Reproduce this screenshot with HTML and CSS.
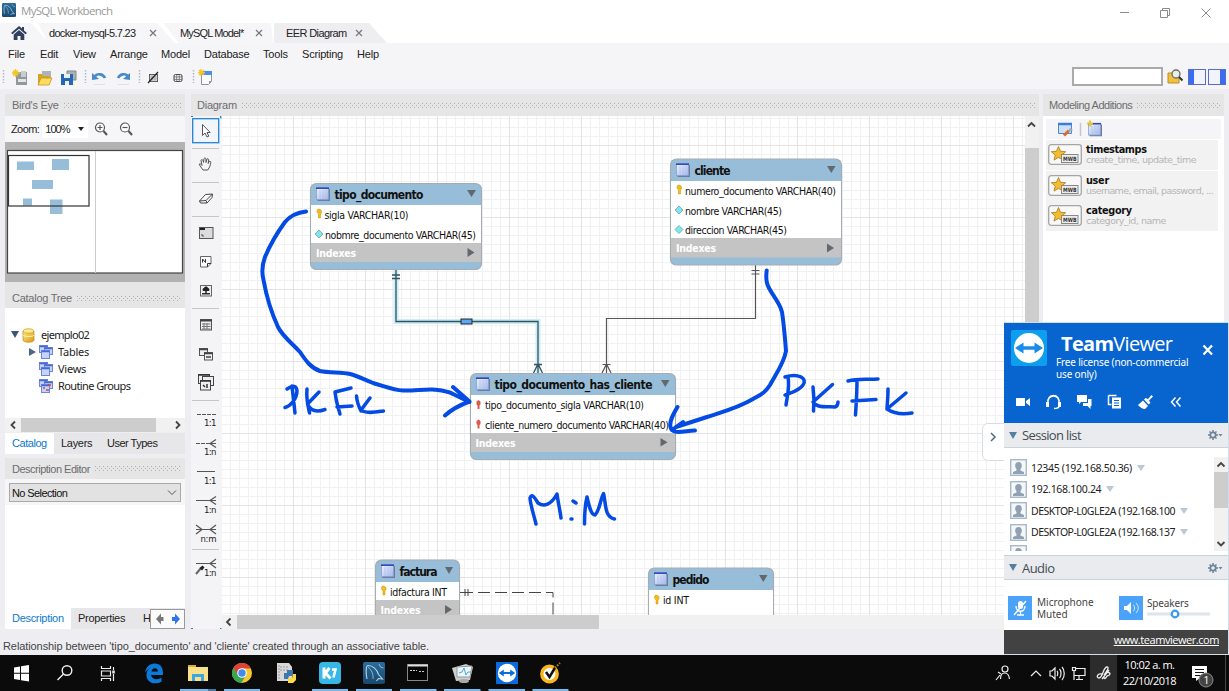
FILE: index.html
```html
<!DOCTYPE html>
<html lang="en">
<head>
<meta charset="utf-8">
<title>MySQL Workbench</title>
<link rel="stylesheet" href="styles.css">
</head>
<body>
<svg class="defs" width="0" height="0">
  <defs>
    <linearGradient id="gold" x1="0" y1="0" x2="1" y2="1"><stop offset="0" stop-color="#ffe98a"/><stop offset="1" stop-color="#d99a10"/></linearGradient>
    <linearGradient id="sheet" x1="0" y1="0" x2="1" y2="1"><stop offset="0" stop-color="#f4f7ff"/><stop offset="1" stop-color="#9db4e6"/></linearGradient>
    <linearGradient id="dol" x1="0" y1="0" x2="0" y2="1"><stop offset="0" stop-color="#2a6d9b"/><stop offset="1" stop-color="#19486c"/></linearGradient>
    <symbol id="dolphin" viewBox="0 0 22 22"><rect width="22" height="22" rx="2" fill="url(#dol)"/><path d="M4 17C2.500 10 3 3.500 5 3.500c5 0 9 4 10.500 9l4 4.500-4-.5-2 2.500" fill="none" stroke="#b8d3e6" stroke-width="1.100"/><path d="M5 5c4 3 5.500 8 5 12M16 2l1.500 3 3 1" fill="none" stroke="#8fb6cf"/></symbol>
    <symbol id="tbl" viewBox="0 0 14 14"><rect x="1.500" y="2" width="12.500" height="12" fill="#6c7c9e"/><rect x=".5" y=".5" width="12" height="12" fill="url(#sheet)" stroke="#8ba0d4" stroke-width=".8"/><path d="M0 1.200h13" stroke="#3047bd" stroke-width="1.600"/><path d="M4 3v9M7 3v9M10 3v9" stroke="#b5c6ee"/></symbol>
    <symbol id="stack" viewBox="0 0 14 14"><g fill="#c3d3fb" stroke="#6c86d9"><rect x=".5" y=".5" width="8" height="7"/><rect x="5.500" y="2.500" width="8" height="7"/><rect x="2.500" y="5.500" width="8" height="8"/></g><path d="M.5 1.500h8M5.500 3.500h8M2.500 6.500h8" stroke="#4969d0" stroke-width="1.500"/></symbol>
    <symbol id="star" viewBox="0 0 34 21"><rect x=".7" y=".7" width="32.600" height="19.600" rx="2.500" fill="#f8f8f8" stroke="#a5a5a5" stroke-width="1.300"/><path d="M10.500 2.500l2 4.800 5.200.4-4 3.400 1.300 5-4.500-2.700L6 16.100l1.300-5-4-3.400 5.200-.4z" fill="#f4bd2e" stroke="#a9761c" stroke-width=".8"/><rect x="13.500" y="10.500" width="16.500" height="8" fill="#eee" stroke="#888"/><text x="15" y="17" font-family="DejaVu Sans Condensed" font-size="6" font-weight="700" fill="#333" textLength="13.500" lengthAdjust="spacingAndGlyphs">MWB</text></symbol>
    <symbol id="person" viewBox="0 0 17 17"><rect x=".7" y=".7" width="15.600" height="15.600" fill="#f5f7f9" stroke="#a9b9c8" stroke-width="1.400"/><path d="M3 15v-2l3.500-1.500V10C4.500 8 4.500 3 8.500 3s4 5 2 7v1.500L14 13v2z" fill="#8fa1b3"/></symbol>
    <symbol id="gear" viewBox="0 0 16 10"><circle cx="5" cy="5" r="2.700" fill="none" stroke="#6d8599" stroke-width="1.800"/><path d="M5 0v2M5 8v2M0 5h2M8 5h2M1.500 1.500l1.300 1.300M7.200 7.200l1.300 1.300M8.500 1.500L7.200 2.800M2.800 7.200L1.500 8.500" stroke="#6d8599" stroke-width="1.500"/><path d="M10.500 4h4l-2 2.500z" fill="#6d8599"/></symbol>
    <symbol id="tv" viewBox="0 0 22 22"><rect width="22" height="22" fill="#0a6bdc"/><circle cx="11" cy="11" r="9.200" fill="#fff"/><path d="M2.800 11l5-3.500V10h6.400V7.500l5 3.500-5 3.500V12H7.800v2.500z" fill="#0a6bdc"/></symbol>
    <symbol id="folder" viewBox="0 0 16 16"><path d="M5 1h9v9H5z" fill="#aeb4b6"/><path d="M1 4h4l1 2h5l3 1-2 8H1z" fill="#d9a520"/><path d="M4 8h11l-3 7H1z" fill="#ffdc5c" stroke="#c7951c" stroke-width=".8"/></symbol>
  </defs>
</svg>

<header class="titlebar">
  <svg width="14" height="14"><use href="#dolphin"/></svg>
  <span class="apptitle">MySQL Workbench</span>
  <svg class="winbtns" width="100" height="22" fill="none" stroke="#8b8b8b"><path d="M1 12.500h9M41.500 10.500h7v7h-7zM43.500 10v-1.500h7v7H49M82.500 8.500l9 9M91.500 8.500l-9 9"/></svg>
</header>

<nav class="tabs">
  <div class="tab home"><svg width="16" height="15" viewBox="0 0 16 15"><path d="M8 0L0 7l1.500 1.200L8 2.700l6.500 5.500L16 7l-3-2.600V1h-2v1.600z" fill="#31405f"/><path d="M2.700 8.500L8 4l5.300 4.500V14H9.500v-4h-3v4H2.700z" fill="#31405f"/></svg></div>
  <div class="tab t1"><span>docker-mysql-5.7.23</span><svg class="x" width="8" height="8"><path d="M1 1l6 6M7 1L1 7"/></svg></div>
  <div class="tab t2"><span>MySQL Model*</span><svg class="x" width="8" height="8"><path d="M1 1l6 6M7 1L1 7"/></svg></div>
  <div class="tab t3"><span>EER Diagram</span><svg class="x" width="8" height="8"><path d="M1 1l6 6M7 1L1 7"/></svg></div>
</nav>

<nav class="menu"><span class="m1">File</span><span class="m2">Edit</span><span class="m3">View</span><span class="m4">Arrange</span><span class="m5">Model</span><span class="m6">Database</span><span class="m7">Tools</span><span class="m8">Scripting</span><span class="m9">Help</span></nav>

<div class="toolbar">
  <svg width="220" height="24" viewBox="0 66 220 24">
    <path d="M3.500 70v13M85.500 70v13M139.500 70v13M193.500 70v13" stroke="#b4b8c2" stroke-width="1.500" stroke-dasharray="1.500 1.500"/>
    <path d="M16 72h11v13H16z" fill="#91979b"/><path d="M18 79h8v3h-8z" fill="#e4e4e4"/><path d="M21 71h5v6h-5z" fill="#c8cdd0"/><path d="M15.500 69v8M12 73h8M13 70.500l5 5M18 70.500l-5 5" stroke="#f3c623" stroke-width="1.500"/>
    <use href="#folder" x="37" y="70" width="16" height="16"/>
    <path d="M67 71h9v9h-9z" fill="#a9afb3" stroke="#858b8f"/><path d="M61 74h12v11H61z" fill="#2467b5"/><path d="M64 74h6v4h-6zM65 81h4v4h-4z" fill="#e9f1fa"/>
    <path d="M95 76c3-3 8-2 10 2" fill="none" stroke="#4889c9" stroke-width="2.600"/><path d="M92 73v7l7-1z" fill="#4889c9"/>
    <path d="M118 78c2-4 7-5 10-2" fill="none" stroke="#4889c9" stroke-width="2.600"/><path d="M130 73v7l-7-1z" fill="#4889c9"/><path d="M94 84.500h11M118 84.500h11" stroke="#e0e0e3"/>
    <rect x="149.500" y="74.500" width="8" height="7" fill="#ddd" stroke="#555"/><path d="M149 79h9M149 77h9M152 74v8M155 74v8" stroke="#999" stroke-width=".6"/><path d="M148 83l10-11" stroke="#222" stroke-width="1.200"/>
    <rect x="174" y="74.500" width="8" height="7" rx="1.500" fill="#eee" stroke="#444"/><path d="M174 77h8M174 79.500h8M176.700 74v8M179.300 74v8" stroke="#666" stroke-width=".7"/>
    <path d="M201.500 71.500h10v10l-3 3h-7z" fill="#fbfbfb" stroke="#8d949d"/><path d="M201 71h11v4h-11z" fill="#4d8ef2"/><path d="M212 81l-3 3v-3z" fill="#999"/><path d="M201 69v7M198 72.500h7M199 70l5 5M204 70l-5 5" stroke="#f3c623" stroke-width="1.300"/>
  </svg>
  <div class="search"></div>
  <svg class="tools-right" width="60" height="24" viewBox="0 0 60 24"><path d="M1 7h5l1 2h5v8H1z" fill="#efc13d" stroke="#bd8d22"/><circle cx="9" cy="8" r="4" fill="#e8eef0" stroke="#6b6b5f" stroke-width="1.300"/><path d="M12 11l3.500 3.500" stroke="#333" stroke-width="2"/><g fill="#f3f4fb" stroke="#5b6bcb"><rect x="21.500" y="3.500" width="17" height="15"/><rect x="41.500" y="3.500" width="17" height="15"/></g><path d="M22 4h5v14h-5zM53 4h5v14h-5z" fill="#3b6df0"/></svg>
</div>

<main class="work">
  <aside class="left">
    <div class="ptitle"><span>Bird's Eye</span><i class="dots"></i></div>
    <div class="zoombar"><span>Zoom:</span><div class="zoombox"><span>100%</span><b></b></div>
      <svg width="42" height="14" fill="none" stroke="#555" stroke-width="1.200"><circle cx="6" cy="5.500" r="4.500" fill="#fff"/><path d="M3.500 5.500h5M6 3v5"/><path d="M9.500 9l3.500 4" stroke-width="2"/><circle cx="31" cy="5.500" r="4.500" fill="#fff"/><path d="M28.500 5.500h5"/><path d="M34.500 9l3.500 4" stroke-width="2"/></svg>
    </div>
    <svg class="bird" width="180" height="140" viewBox="5 142 180 140"><rect x="7.500" y="150.500" width="175" height="122.500" fill="#fff" stroke="#444" stroke-width="1.200"/><path d="M95.500 151v122" stroke="#ccc"/><g fill="#98bdd8"><path d="M17 161.500h17v8.500H17zM52 159h17v11H52zM32 180h21v9H32zM23 198.500h9v7h-9zM50 199.500h12.500V214H50z"/></g><rect x="8.500" y="155.500" width="80.500" height="50.500" fill="none" stroke="#333" stroke-width="1.200"/></svg>
    <div class="ptitle cat"><span>Catalog Tree</span><i class="dots"></i></div>
    <ul class="tree">
      <li><svg width="30" height="16"><path d="M7 4h8l-4 7z" fill="#3f5679"/><path d="M19 4v9c0 3 11 3 11 0V4" fill="url(#gold)" stroke="#b98b1a" stroke-width=".7"/><ellipse cx="24.500" cy="4" rx="5.200" ry="2.200" fill="#ffe98c" stroke="#c59a25" stroke-width=".7"/><path d="M19 8c0 2 11 2 11 0" fill="none" stroke="#fff2b8"/></svg><span>ejemplo02</span></li>
      <li><svg width="48" height="16"><path d="M25 4v8l7-4z" fill="#4b6488"/><use href="#stack" x="35" y="1" width="14" height="14"/></svg><span>Tables</span></li>
      <li><svg width="48" height="16"><use href="#stack" x="35" y="1" width="14" height="14"/></svg><span>Views</span></li>
      <li><svg width="48" height="16"><use href="#stack" x="35" y="1" width="14" height="14"/><path d="M39 10h2M42 12h3M44 7h3" stroke="#d04a50" stroke-width="1.500"/></svg><span class="rg">Routine Groups</span></li>
    </ul>
    <div class="hscroll"><svg width="16" height="14"><path class="ch" d="M10 3.500L6.500 7l3.500 3.500"/></svg><i></i><svg width="16" height="14"><path class="ch" d="M7 3.500L10.500 7 7 10.500"/></svg></div>
    <div class="ltabs"><span class="on a">Catalog</span><span class="b">Layers</span><span class="c">User Types</span></div>
    <div class="ptitle desc"><span class="de">Description Editor</span><i class="dots"></i></div>
    <div class="selwrap"><div class="select"><span>No Selection</span><svg width="10" height="7"><path d="M1 1.500l4 4 4-4" fill="none" stroke="#555"/></svg></div></div>
    <div class="blank"></div>
    <div class="ltabs bottom"><span class="on a2">Description</span><span class="b2">Properties</span><span class="c2">H</span><div class="arrows"><svg width="34" height="20"><path d="M10 3.500v3.500h2.500v4H10v3.500L5 9z" fill="#777"/><path d="M21 7h3V3.500L29 9l-5 5.500V11h-3z" fill="#2f74ea"/></svg></div></div>
  </aside>

  <section class="center">
    <div class="ptitle dg"><span>Diagram</span><i class="dots"></i></div>
    <div class="editor">
      <svg class="palette" width="31" height="513" viewBox="191 116 31 513">
        <rect x="192.700" y="118.700" width="26" height="24" fill="#f2f6fb" stroke="#1f83d6" stroke-width="1.300"/>
        <path d="M191 116.500h2M220 116.500h1v2M191 628.500h2M220 628.500h1.500" stroke="#1f83d6"/>
        <path d="M192 148.500h27M192 182.500h27M192 216.500h27M192 308.500h27M192 400.500h27M192 549.500h27" stroke="#c6c6c9"/>
        <path d="M202.500 124.500v11l2.500-2.500 2 4 1.800-.8-1.800-3.700h3.200z" fill="#fff" stroke="#555"/>
        <path d="M203 170l-3.500-5c-.5-2 1-1.500 2.500.5l-1-5c.5-1.500 1.500-1 2 0l.5 2 .5-4c1-1 1.700-.5 2 .5v3.500l1-3.500c1-.8 1.500 0 1.700 1l-.5 3.500 1-2c1-.5 1.800 0 1.600 1-.5 3-1 4.500-3 7.500z" fill="#f4f4f4" stroke="#555"/>
        <path d="M199.500 201l6-6.500 7-.5-.5 3.500-5 5.500h-6.500zM199.500 201l6.500-.5 6.500-6.500M206 200.500l1 2.500" fill="#fff" stroke="#444"/>
        <rect x="199.500" y="227.500" width="13.500" height="11" fill="#dcdcdc" stroke="#555"/><path d="M200 229h5" stroke="#222" stroke-width="2"/><path d="M202 234v2h2" stroke="#555" fill="none"/>
        <path d="M200.500 256.500h10.500v7l-3.500 3.500h-7z" fill="#fafafa" stroke="#666"/><path d="M202.500 262.500v-3.500l3 3.500v-3.500M207.500 267v-3.500h3.500" fill="none" stroke="#333"/>
        <rect x="200.500" y="285.500" width="11" height="10.500" fill="#eee" stroke="#666"/><path d="M202 293h8v1.500h-8z" fill="#333"/><path d="M203 291c-1-2 0-3 1-3 .5-2 3.500-2 4 0 1 0 2 1 1 3z" fill="#222"/><path d="M206 289v5" stroke="#222" stroke-width="1.500"/>
        <rect x="200.500" y="319.500" width="11" height="10.500" fill="#eee" stroke="#555"/><path d="M200 320.500h12" stroke="#444" stroke-width="2"/><path d="M202 324h8.500M202 326.500h8.500M202 329h8.500M204 323v6M207 323v6" stroke="#777"/>
        <g fill="#eee" stroke="#555"><rect x="199.500" y="348.500" width="8" height="7"/><rect x="204.500" y="352.500" width="8" height="7.500"/></g><path d="M199 349.500h9M204 353.500h9M206 357h5" stroke="#444" stroke-width="1.500"/>
        <g fill="#eee" stroke="#444"><rect x="198.500" y="374.500" width="11" height="9"/><rect x="202.500" y="376.500" width="11" height="9"/><rect x="200.500" y="380.500" width="10" height="9.500"/></g><path d="M198 375h12M200 381h11M203 385l2 2M207 384v4" stroke="#333" stroke-width="1.500"/>
        <g fill="none" stroke="#555" stroke-width="1.200"><path d="M197 414.500h19" stroke-dasharray="4 1"/><path d="M196 443.500h14" stroke-dasharray="4 1"/><path d="M210 443.500h6M216 439.500l-6 4 6 4M197 471.500h18M196 500.500h20M216 496.500l-6 4 6 4M196 529.500h20M216 525l-6 4.500 6 4.500M196 525l6 4.500-6 4.500M196 563.500h20M216 559l-6 4.500 6 4.500"/></g>
        <path d="M196 574l5-6" stroke="#666" stroke-width="2"/><path d="M199.500 568l3-2.500 2 2-2.500 3z" fill="#222"/>
        <g class="ratio"><text x="204" y="426" textLength="12.500">1:1</text><text x="204" y="455" textLength="12.500">1:n</text><text x="204" y="483.500" textLength="12.500">1:1</text><text x="204" y="512.500" textLength="12.500">1:n</text><text x="200.500" y="541.500" textLength="16">n:m</text><text x="204" y="575.500" textLength="12.500">1:n</text></g>
      </svg>

      <div class="canvaswrap">
        <svg class="canvas" width="803" height="499" viewBox="222 116 803 499">
          <defs>
            <pattern id="minor" x="5" y="1" width="9" height="9" patternUnits="userSpaceOnUse"><path d="M.5 0v9M0 .5h9" stroke="#f1f1f1"/></pattern>
            <pattern id="major" x="5" y="1" width="72" height="72" patternUnits="userSpaceOnUse"><path d="M.5 0v72M0 .5h72" stroke="#e4e4e4"/></pattern>
          </defs>
          <rect x="222" y="116" width="803" height="499" fill="#fff"/>
          <rect x="222" y="116" width="803" height="499" fill="url(#minor)"/>
          <rect x="222" y="116" width="803" height="499" fill="url(#major)"/>

          <g fill="none">
            <path d="M396 270v51.500h142V373" stroke="#c9ecf7" stroke-width="5"/>
            <path d="M396 270v51.500h142V373M392 275h8M392 278.500h8M533.500 373l4.500-9 4.500 9M534 364.500h8" stroke="#35535f" stroke-width="1.300"/>
            <rect x="461" y="319" width="11" height="5" fill="#5aa8f5" stroke="#222"/>
            <path d="M755.500 265v53.500h-149V373M751.500 270.500h8M751.500 274h8M602 373l4.500-9 4.500 9M602.500 364.500h8" stroke="#555" stroke-width="1.200"/>
            <path d="M459 592.500h14M465 589v7M468 589v7" stroke="#444"/><path d="M478 592.500h75V615" stroke="#444" stroke-dasharray="12 5"/>
          </g>

          <g class="node">
            <rect x="310.500" y="183.500" width="171" height="86" rx="6" class="frame"/>
            <rect x="311" y="205" width="170" height="38" fill="#fff"/><rect x="311" y="243" width="170" height="19" class="idx"/>
            <use href="#tbl" x="316" y="187" width="14" height="14"/><text class="nt" x="334.500" y="199" textLength="89">tipo_documento</text><path class="tri" d="M467 190h9l-4.500 7z"/>
            <text x="324.500" y="218.500" textLength="84">sigla VARCHAR(10)</text><text x="325" y="238.500" textLength="151">nobmre_documento VARCHAR(45)</text>
            <text class="it" x="316" y="257" textLength="40">Indexes</text><path class="tri" d="M467.500 248v9l7-4.500z"/>
          </g>
          <g class="node">
            <rect x="670.500" y="159" width="171" height="106" rx="6" class="frame"/>
            <rect x="671" y="181" width="170" height="57" fill="#fff"/><rect x="671" y="238" width="170" height="19.500" class="idx"/>
            <use href="#tbl" x="676" y="163" width="14" height="14"/><text class="nt" x="694.500" y="174.500" textLength="36">cliente</text><path class="tri" d="M827 166h8.500l-4.200 7z"/>
            <text x="685" y="194.500" textLength="151">numero_documento VARCHAR(40)</text><text x="685" y="214.500" textLength="97">nombre VARCHAR(45)</text><text x="685" y="234" textLength="102">direccion VARCHAR(45)</text>
            <text class="it" x="676" y="252" textLength="40">Indexes</text><path class="tri" d="M827 243.500v9l7-4.500z"/>
          </g>
          <g class="node">
            <rect x="470.500" y="373.500" width="205" height="86" rx="6" class="frame"/>
            <rect x="471" y="395" width="204" height="38" fill="#fff"/><rect x="471" y="433" width="204" height="19" class="idx"/>
            <use href="#tbl" x="476" y="377" width="14" height="14"/><text class="nt" x="494.500" y="388.500" textLength="158">tipo_documento_has_cliente</text><path class="tri" d="M661 380h8.500l-4.200 7z"/>
            <text x="485" y="408.500" textLength="159">tipo_documento_sigla VARCHAR(10)</text><text x="485" y="428.500" textLength="184">cliente_numero_documento VARCHAR(40)</text>
            <text class="it" x="475.500" y="446.500" textLength="40">Indexes</text><path class="tri" d="M660.500 438v8.500l7-4.200z"/>
          </g>
          <g class="node">
            <path d="M375.500 620v-54a6 6 0 0 1 6-6h72a6 6 0 0 1 6 6v54z" class="frame"/>
            <rect x="376" y="582" width="83" height="18" fill="#fff"/><rect x="376" y="600" width="83" height="15" class="idx"/>
            <use href="#tbl" x="381" y="564" width="14" height="14"/><text class="nt" x="399.500" y="576" textLength="38">factura</text><path class="tri" d="M445 567h8l-4 7z"/>
            <text x="390" y="596" textLength="57">idfactura INT</text>
            <text class="it" x="380.500" y="614" textLength="40">Indexes</text><path class="tri" d="M445 605v9l7-4.500z"/>
          </g>
          <g class="node">
            <path d="M648.500 620v-46a6 6 0 0 1 6-6h113a6 6 0 0 1 6 6v46z" class="frame"/>
            <rect x="649" y="590" width="124" height="25" fill="#fff"/>
            <use href="#tbl" x="654" y="572" width="14" height="14"/><text class="nt" x="672.500" y="584" textLength="37">pedido</text><path class="tri" d="M759 575h8.500l-4.200 7z"/>
            <text x="663" y="604" textLength="26">id INT</text>
          </g>
          <g fill="#f3bd1a" stroke="#c78f12" stroke-width=".5"><path id="key" d="M317.500 209.500c1.500-1 3.500 0 4 1.500s-.5 2.500-1 3v4h-2v-4c-1.500-1-2-3-1-4.500z"/><use href="#key" x="360" y="-24"/><use href="#key" x="64.500" y="377"/><use href="#key" x="337.500" y="386"/></g>
          <path d="M478.500 400l2 1.500v3l-1 1v3.500h-2v-3.500l-1-1v-3zM478.500 419.500l2 1.500v3l-1 1v3.500h-2v-3.500l-1-1v-3z" fill="#dc5a4c"/>
          <path d="M319 230l4 4-4 4-4-4zM679 206l4 4-4 4-4-4zM679 225.500l4 4-4 4-4-4z" fill="#7fe6ea" stroke="#6f9fb0" stroke-width=".8"/>

          <g class="ink">
            <path d="M306 211.500C297 212.500 290 216 285 222C277 233 270 245 265 257C262 265 261.500 272 263.500 280C266 294 272 314 278 327C283 337 293 344 300 352C306 361 311 368 320 371C330 373 341 372 350 374C358 376 365 380 373 383C384 386 393 390 403 390.500C413 391 424 389 433 389.500C441 390.500 448 391 453 394L469.500 402M453 387L469.500 401.500C460 405 451 410 445 415.500"/>
            <path d="M766.700 270.500C766 276 766 279 767 283C769 292 779 300 782 312C784 325 785 338 786 351C784 363 776 374 770 385C765 393 760 395 753 399C738 408 722 412 707 417L676 427M677.500 407C674 413 669 421 670.500 427C672 436 687 430 695 430.500M672 430L683 422"/>
            <g class="thin">
              <path d="M292 386L295 413M287 389C290 387 296 383 297 391C297 398 291 406 285 407.500M307 389C306 399 308 406 309.500 413M319 392L307.500 404C311 412 318 412 325 409.500M335 392C336 402 338 407 340 414M335 392L351 388M337 407L352 406M356.500 396C357 403 359 407 361 411M370 398L361 410C366 414 376 412 383.500 411"/>
              <path d="M788 377C790 387 787 397 786 405M785 377C798 373 808 378 803 385C799 391 792 392 785 395M813 387C814 395 814 406 813.500 411M832.500 384.500L813 402C818 409 827 406 835 407C838 406 838 404 838 402M848 381C859 378 868 380 878 379M857 380C857 395 856 406 855.500 415M852 401L876 399.500M888 389C888 400 887 405 887 409M906 393L887 409C893 413 901 415 912 413"/>
              <path d="M536 524C533 512 530 503 530 498C532 492 536 500 538 503C544 507 551 505 557 494C558 502 560 510 561 518M572 519L571 519M573 501L576 503M584.500 524C584.500 512 585 505 587 497C589 506 591 515 595 515C600 510 600 500 603.500 493.500C606 502 604 517 614.500 519"/>
            </g>
          </g>
        </svg>
        <div class="vscroll"><svg width="14" height="16"><path class="ch" d="M3 10.500L6.500 7l3.500 3.500"/></svg><i></i></div>
        <div class="hscroll2"><svg width="15" height="14"><path class="ch" d="M8.500 3.500L5 7l3.500 3.500"/></svg><i></i></div>
      </div>
    </div>
  </section>

  <aside class="right">
    <div class="ptitle ma"><span>Modeling Additions</span><i class="dots"></i></div>
    <div class="additions">
      <div class="addbar"><svg width="50" height="20"><path d="M4.500 4.500h13v10h-13z" fill="#cfe0fa" stroke="#4989d9"/><path d="M4 5h14" stroke="#3a7ddb" stroke-width="2.500"/><path d="M10 16.500l5-5" stroke="#e0682d" stroke-width="3"/><path d="M14 12l2-3 3 2-3 2z" fill="#a9a9a9"/><path d="M26.500 4v13" stroke="#c4c7cf" stroke-width="1.500"/><use href="#tbl" x="34" y="3.500" width="14" height="14"/><path d="M36 1.500v6M33 4.500h6" stroke="#f1c62b" stroke-width="2"/></svg></div>
      <div class="add"><svg width="34" height="21"><use href="#star"/></svg><div><b class="w1">timestamps</b><small class="s1">create_time, update_time</small></div></div>
      <div class="add"><svg width="34" height="21"><use href="#star"/></svg><div><b class="w2">user</b><small class="s2">username, email, password, ...</small></div></div>
      <div class="add"><svg width="34" height="21"><use href="#star"/></svg><div><b class="w3">category</b><small class="s3">category_id, name</small></div></div>
    </div>
  </aside>
</main>

<footer class="status">Relationship between 'tipo_documento' and 'cliente' created through an associative table.</footer>

<div class="taskbar">
  <svg width="600" height="36" viewBox="0 655 600 36">
    <path d="M14 667.500l6-1v6.300h-6zM21 666.300l8-1.300v7.800h-8zM14 673.800h6v6.200l-6-1zM21 673.800h8v7.700l-8-1.300z" fill="#fff"/>
    <g fill="none" stroke="#eee" stroke-width="1.400"><circle cx="67" cy="670.500" r="4.800"/><path d="M63.500 674l-6 6"/><path d="M101.500 666v2.500h9V666M101.500 681v-2.500h9v2.500M101.500 671h9v5h-9zM113.500 667v3M113.500 674v7" stroke-width="1.200"/><path d="M113.500 670.500v3" stroke-width="2.500"/></g>
    <path d="M145 672.500c1-5.500 4.500-9 9.500-9 6 0 8.500 4 8.500 10v1.500h-12c1 5 7 5 10.500 2.800v4c-8 4-16 0-15-8 .5-3 2-5 4.500-6-2 1-4 2-6 4.700zM151.500 671.500h6.500c0-4.500-6-4.500-6.500 0z" fill="#0b7ad8" fill-rule="evenodd"/>
    <path d="M188 665h7l1 2h12v14h-20z" fill="#f9e08b"/><path d="M188 665h8v2h-8z" fill="#dcae2e"/><path d="M192 681v-7h12v7h-3v-4h-6v4z" fill="#3ba8e2"/>
    <circle cx="242" cy="673" r="10" fill="#f6c933"/><path d="M233.300 668A10 10 0 0 1 251 668.500h-9l-4.500 7z" fill="#dc4437"/><path d="M233.300 668a10 10 0 0 0 8.200 15l4.500-8h-8z" fill="#36a852"/><circle cx="242" cy="673" r="4.800" fill="#fff"/><circle cx="242" cy="673" r="3.700" fill="#4489ee"/>
    <path d="M277 663h12l3 4v14h-15z" fill="#d9d9d9"/><path d="M279 665v14M280 667h8M280 670h8" stroke="#999" stroke-dasharray="2 1"/><path d="M287 670h6v6h-4l-1 3h-4v-6h3z" fill="#3e78ad"/><path d="M293 674h3v6l-3 3h-5v-5h4z" fill="#ffd848"/>
    <rect x="319" y="662" width="22" height="22" rx="4" fill="#37b7e8"/><path d="M324 667.500v11M324.500 674l5-6M325.500 673l5 5.500" stroke="#fff" stroke-width="3"/><path d="M332 669.500h3.500l-2 8" stroke="#fff" stroke-width="2.500" fill="none"/>
    <use href="#dolphin" x="363" y="662" width="22" height="22"/>
    <rect x="407.500" y="664.500" width="20" height="16" fill="#050505" stroke="#888"/><path d="M408 665.500h20" stroke="#ddd" stroke-width="2"/><path d="M410 670.500h7M419 671.500h5" stroke="#ccc" stroke-dasharray="2 1"/>
    <path d="M452 668l14-4 7 3-3 13-14 1z" fill="#c9ced0"/><path d="M457 667l15-1-2 11h-13z" fill="#eef5f8" stroke="#999"/><path d="M459 673l3-1 2-4 2 7 2-3h3" fill="none" stroke="#46a9d8"/><ellipse cx="464" cy="681" rx="5" ry="2" fill="#aaa"/>
    <use href="#tv" x="496" y="662" width="22" height="22"/>
    <circle cx="549.500" cy="674" r="7.700" fill="#fff" stroke="#f8b81b" stroke-width="3.400"/><path d="M546 672l3.500 5 6-10" fill="none" stroke="#111" stroke-width="2.500"/><path d="M555 668l5-5" stroke="#b28a18" stroke-width="2" stroke-dasharray="1.500 1.500"/>
    <path d="M180 690h36M224 690h36M312 690h36M356 690h36M400 690h36.500M444 690h36.500M488.500 690h36.500M532.500 690h36" stroke="#76b9ed" stroke-width="2"/><path d="M208 690h8" stroke="#47779e" stroke-width="2"/>
  </svg>
  <div class="tray">
    <svg width="124" height="36" viewBox="993 655 124 36"><rect x="1090" y="655" width="28" height="36" fill="#2c2c2c"/><g fill="none" stroke="#eee" stroke-width="1.200"><circle cx="1005" cy="669" r="3"/><path d="M1000.500 679c0-8 8-8 9 0M996 680l4-5M998 672l3 2"/><path d="M1031 676l5-5 5 5"/><path d="M1050 671h2l3-3v11l-3-3h-2zM1057 671c1 1 1 4 0 5M1059.500 669c2 2 2 7 0 9M1062 667c3 3 3 10 0 13"/><path d="M1075 668.500h10v7h-11v-3M1079 676v3M1076 679.500h7M1072.500 667.500h3v3h-3zM1074 671v9"/><path d="M1102 674c-5-1-6 4-3 4 4 0 4-11 8-11 3 0-1 5-3 8M1102 679l7-9M1106 673c4-2 6 2 1 3-1 2-3 4-3 1" stroke-width="1.300"/></g></svg>
    <div class="clock"><span class="hr">10:02 a. m.</span><span class="dt">22/10/2018</span></div>
    <svg width="45" height="36" viewBox="1184 655 45 36"><path d="M1192 666h15v12h-7l-4 3v-3h-4z" fill="#fff"/><path d="M1195 669.500h9M1195 672.500h9M1195 675.500h6" stroke="#111"/><circle cx="1206" cy="680" r="7" fill="#444" stroke="#888"/><text x="1203.300" y="684" font-family="Open Sans" font-size="11" fill="#fff">1</text><path d="M1225.500 655v36" stroke="#444"/></svg>
  </div>
</div>

<div class="handle"><svg width="8" height="10"><path d="M2 1l4 4-4 4" fill="none" stroke="#4c6984" stroke-width="1.500"/></svg></div>
<section class="tvpanel">
  <div class="tvhead">
    <div class="tvrow">
      <svg width="36" height="36" viewBox="0 0 36 36"><rect width="36" height="36" rx="2" fill="#0e9eef"/><circle cx="18" cy="18" r="15" fill="#fff"/><path d="M4 18l8.500-5.500v3.700h11v-3.700L32 18l-8.500 5.500v-3.700h-11v3.700z" fill="#1a8bea"/></svg>
      <div class="tvtext"><div class="brand"><b>Team</b>Viewer</div><div class="lic">Free license (non-commercial<br>use only)</div></div>
      <svg class="close" width="12" height="12"><path d="M1.500 1.500l8.500 9M10 1.500l-8.500 9" stroke="#fff" stroke-width="2.300"/></svg>
    </div>
    <svg class="tvicons" width="180" height="18" viewBox="1010 393 180 18"><path d="M1016 398h9v8h-9zM1026 401l4-3v8l-4-3z" fill="#fff"/><path d="M1048 404c-2-11 13-11 11 0" fill="none" stroke="#fff" stroke-width="1.800"/><path d="M1046 402h3v5h-3zM1058 402h3v5h-3z" fill="#fff"/><path d="M1059 406c0 2-2 2.500-5 2.500" fill="none" stroke="#fff" stroke-width="1.400"/><path d="M1077 395h10v7h-6l-2 2v-2h-2z" fill="#fff"/><path d="M1088 399h3.500v7h-1v3l-3-3H1083v-3h5z" fill="#fff"/><path d="M1108.500 395.500h8M1108.500 395.500v9h3" fill="none" stroke="#fff" stroke-width="1.500"/><path d="M1112 397.500h9v11h-9z" fill="#fff"/><path d="M1114 400.500h5M1114 403h5M1114 405.500h5" stroke="#0864cf"/><path d="M1151.500 395l1.500 1.500-4 4 1.500 2.500-2 1.500-4.500-5 1.500-1.500 2.500 1zM1143 400.500l5 5.500-3 3c-3 0-5-2-7-4z" fill="#fff"/><path d="M1175.500 397.500l-4 4.500 4 4.500M1180.500 397.500l-4 4.500 4 4.500" fill="none" stroke="#fff" stroke-width="1.500"/></svg>
  </div>
  <div class="sec"><i class="down"></i><span class="sl">Session list</span><svg width="16" height="10"><use href="#gear"/></svg></div>
  <div class="sessions">
    <div class="slist">
      <div><svg width="17" height="17"><use href="#person"/></svg><span class="p1">12345 (192.168.50.36)</span><i></i></div>
      <div><svg width="17" height="17"><use href="#person"/></svg><span class="p2">192.168.100.24</span><i></i></div>
      <div><svg width="17" height="17"><use href="#person"/></svg><span class="p3">DESKTOP-L0GLE2A (192.168.100</span><i></i></div>
      <div><svg width="17" height="17"><use href="#person"/></svg><span class="p3">DESKTOP-L0GLE2A (192.168.137</span><i></i></div>
      <div><svg width="17" height="17"><use href="#person"/></svg></div>
    </div>
    <div class="sscroll"><svg width="14" height="15"><path class="ch" d="M3.500 9.500L7 6l3.500 3.500"/></svg><i></i><svg width="14" height="14"><path class="ch" d="M3.500 5L7 8.500 10.500 5"/></svg></div>
  </div>
  <div class="sec audio"><i class="down"></i><span class="au">Audio</span><svg width="16" height="10"><use href="#gear"/></svg></div>
  <div class="audiobox">
    <svg width="24" height="24"><rect width="24" height="24" fill="#4aa3f8"/><rect x="10" y="5" width="5" height="8" rx="2.500" fill="#fff"/><path d="M8 10c0 7 9 7 9 0M12.500 15v4M9 19h7M6 19L18 5" fill="none" stroke="#fff" stroke-width="1.400"/></svg>
    <div class="mic">Microphone<br>Muted</div>
    <svg width="24" height="24"><rect width="24" height="24" fill="#4aa3f8"/><path d="M5 10h3l4-4v12l-4-4H5z" fill="#fff"/><path d="M14.500 9c1.500 2 1.500 4 0 6M17 7c3 3 3 7 0 10" fill="none" stroke="#d6eaff"/></svg>
    <div class="spk"><span>Speakers</span><svg width="64" height="10"><path d="M0 5h63" stroke="#dfe5eb" stroke-width="3"/><circle cx="28" cy="5" r="3.300" fill="#fff" stroke="#3899f0" stroke-width="2.200"/></svg></div>
  </div>
  <div class="tvfoot"><u>www.teamviewer.com</u></div>
</section>
</body>
</html>
```

FILE: styles.css
```css
* { box-sizing: border-box; }
body { margin: 0; width: 1229px; height: 691px; overflow: hidden; position: relative; display: flex; flex-direction: column; background: #eeeef2; font: 11px/14px "Liberation Sans", Arial, sans-serif; color: #222; }
svg { display: block; flex: none; }
span, b, small { white-space: nowrap; }
.defs { position: absolute; }
.ch { fill: none; stroke: #444; stroke-width: 1.8; }

.titlebar { height: 23px; background: #fff; display: flex; align-items: flex-start; padding: 3px 0 0 2px; flex: none; }
.apptitle { font: 11.5px/15px "Open Sans", sans-serif; color: #999; margin-left: 5px; letter-spacing: -0.7px; }
.winbtns { margin: -3px 10px 0 auto; }

.tabs { height: 20px; background: #fff; display: flex; flex: none; align-items: stretch; }
.tab { background: #f6f6f8; display: flex; align-items: center; position: relative; clip-path: polygon(0 0, calc(100% - 18px) 0, 100% 100%, 0 100%); }
.tab .x { stroke: #777; stroke-width: 1.2; margin-left: auto; }
.home { width: 49px; padding-left: 11px; }
.t1 { width: 141px; padding: 0 22px 0 11px; margin-left: -11px; clip-path: polygon(0 0, calc(100% - 22px) 0, calc(100% - 4px) 100%, 10px 100%); }
.t2 { width: 111px; padding: 0 11px 0 17px; margin-left: -16px; clip-path: polygon(0 0, calc(100% - 3px) 0, calc(100% - 1px) 100%, 16px 100%); }
.t3 { width: 113px; padding: 0 24px 0 12px; background: #eeeef1; }
.t1 span { letter-spacing: -0.7px; }
.t2 span { letter-spacing: -0.85px; }
.t3 span { letter-spacing: -0.6px; }

.menu { height: 23px; background: #f5f5f8; display: flex; align-items: center; padding: 0 0 2px 8px; flex: none; }
.menu span { letter-spacing: -0.2px; }
.m1 { width: 32px; } .m2 { width: 33px; } .m3 { width: 37px; } .m4 { width: 51px; } .m5 { width: 43px; } .m6 { width: 59px; } .m7 { width: 39px; } .m8 { width: 55px; }

.toolbar { height: 23px; background: #f5f5f8; display: flex; align-items: flex-start; flex: none; }
.search { width: 91px; height: 19px; border: 2px solid #aaa; background: #fff; margin: 1px 4px 0 852px; }
.work { height: 548px; flex: none; display: grid; grid-template-columns: 180px 848px 179px; column-gap: 6px; padding: 5px 0 8px 5px; }
.right { margin-left: -2px; }
.ptitle { height: 22px; background: #e6e6e6; display: flex; align-items: center; padding: 0 4px 0 7px; color: #6c6c70; }
.ptitle span { letter-spacing: -0.25px; }
.ptitle.dg, .ptitle.ma { padding-left: 6px; }
.ma span, .ptitle .de { letter-spacing: -0.5px; }
.dots { flex: 1; height: 5px; margin-left: 5px; background: linear-gradient(#b4b4b4, #b4b4b4) 0 0/4px 4px, linear-gradient(#b4b4b4, #b4b4b4) 2px 2px/4px 4px; background: conic-gradient(from 270deg at 1px 1px, #b0b0b0 90deg, transparent 0) 0 0/4px 4px, conic-gradient(from 270deg at 1px 1px, #b0b0b0 90deg, transparent 0) 2px 2px/4px 4px; }

.left { display: flex; flex-direction: column; height: 535px; }
.zoombar { height: 26px; background: #f6f6f8; display: flex; align-items: center; padding-left: 6px; }
.zoombar > span { letter-spacing: -0.6px; }
.zoombox { margin: 0 6px 0 3px; background: #fff; display: flex; align-items: center; height: 18px; width: 46px; padding-left: 3px; justify-content: space-between; }
.zoombox b { border: 3px solid transparent; border-top: 4px solid #222; border-bottom: 0; margin-right: 4px; }
.zoombox span { letter-spacing: -0.9px; }
.bird { background: #b2b2b2; }
.cat { height: 26px; padding-top: 6px; }
.tree { height: 110px; background: #fff; margin: 0; padding: 18px 0 0; list-style: none; font-family: "Noto Sans", sans-serif; }
.tree li { display: flex; align-items: center; height: 17px; }
.tree li svg { margin-left: -1px; overflow: visible; }
.tree li:first-child svg { width: 31px; }
.tree span { margin-left: 6px; letter-spacing: -0.25px; }
.tree li:first-child span { letter-spacing: -0.7px; }
.tree .rg { letter-spacing: -0.6px; }
.hscroll { height: 14px; background: #f1f1f1; display: flex; }
.hscroll i { width: 135px; background: #cdcdcd; margin-right: 13px; }
.ltabs { height: 21px; margin-top: 1px; background: #e7e7e9; display: flex; position: relative; line-height: 21px; }
.ltabs span { padding-left: 7px; letter-spacing: -0.3px; }
.ltabs .c { letter-spacing: -0.5px; }
.ltabs .on { background: #fff; color: #0b79cf; }
.a { width: 49px; } .b { width: 46px; } .a2 { width: 66px; } .b2 { width: 65px; }
.ltabs .a { letter-spacing: -0.45px; }
.desc { margin-top: 4px; height: 21px; }
.selwrap { height: 26px; padding: 4px 4px 0; background: #f6f6f8; }
.select { height: 19px; background: #e2e2e2; border: 1px solid #a9a9a9; display: flex; align-items: center; justify-content: space-between; padding: 0 3px 0 2px; }
.select span { color: #111; letter-spacing: -0.6px; }
.blank { height: 103px; background: #fff; }
.bottom { margin-top: 0; }
.arrows { position: absolute; right: 0; top: 1px; width: 35px; height: 20px; border: 1px solid #999; background: #fafafa; }

.center { display: flex; flex-direction: column; height: 535px; }
.editor { display: flex; }
.palette { background: #f4f4f7; }
.ratio { font: 9.5px "DejaVu Sans Condensed", sans-serif; fill: #222; }
.canvaswrap { display: grid; grid-template: 499px 14px / 803px 14px; }
.vscroll { background: #f1f1f1; display: flex; flex-direction: column; grid-row: 1 / 3; grid-column: 2; }
.vscroll svg { margin-bottom: 16px; }
.vscroll i { flex: 1; background: #cdcdcd; }
.hscroll2 { background: #f1f1f1; display: flex; }
.hscroll2 i { width: 362px; background: #cdcdcd; }
.node text { font: 10.5px "DejaVu Sans Condensed", Tahoma, sans-serif; fill: #111; }
.node .nt { font-size: 12px; font-weight: 700; }
.node .it { font-weight: 700; font-size: 10.5px; fill: #fff; }
.frame { fill: #98bdd8; stroke: #a6adb2; stroke-width: 1.2; }
.idx { fill: #c4c4c4; }
.tri { fill: #62696e; }
.ink { fill: none; stroke: #044be4; stroke-width: 4; stroke-linecap: round; stroke-linejoin: round; }
.thin { stroke-width: 3.5; }

.additions { background: #fff; height: 513px; padding: 3px 3px 0 3px; }
.addbar { height: 20px; background: #f5f5f8; padding-left: 8px; }
.add { height: 30px; margin: 1px 3px 0 0; background: #f2f2f2; display: flex; padding: 4px 0 0 2px; }
.add + .add { margin-top: 0.7px; }
.add > div { margin-left: 4px; display: flex; flex-direction: column; }
.add b { font: 700 10.8px/12px "DejaVu Sans Condensed", sans-serif; color: #111; }
.add .w1 { letter-spacing: -0.4px; }
.add .w2, .add .w3 { letter-spacing: -0.3px; }
.add small { font: 9.5px/10px "DejaVu Sans", sans-serif; color: #b5b5b5; margin-top: -1px; letter-spacing: -0.5px; }
.add .s2 { letter-spacing: -0.63px; }

.status { height: 18px; flex: none; padding-left: 3px; line-height: 18px; color: #444; white-space: nowrap; letter-spacing: -0.09px; }
.taskbar { height: 36px; flex: none; background: #0b0b0b; display: flex; justify-content: space-between; }
.tray { display: flex; color: #fff; }
.clock { width: 67px; display: flex; flex-direction: column; align-items: center; padding: 2px 2px 0 0; font: 11px/16px "Open Sans", sans-serif; letter-spacing: -0.55px; }

.handle { position: absolute; left: 982px; top: 423px; width: 23px; height: 38px; background: #fff; border: 1px solid #d7dde2; border-radius: 6px 0 0 6px; padding: 8px 0 0 6px; }
.tvpanel { position: absolute; left: 1004px; top: 322px; width: 225px; height: 333px; background: #fff; border: 1px solid #d3dde6; border-left-width: 0; display: flex; flex-direction: column; }
.tvhead { height: 100px; background: #0864cf; color: #fff; flex: none; padding: 7px 0 0 7px; }
.tvrow { display: flex; height: 63px; position: relative; }
.tvtext { margin-left: 9px; width: 137px; }
.brand { font: 20px/26px "Open Sans", sans-serif; letter-spacing: -0.7px; margin: 1px 0 0 5px; }
.lic { font: 10px/12px "Noto Sans", sans-serif; margin-top: -1px; white-space: nowrap; letter-spacing: -0.17px; }
.close { margin: 14px 0 0 9px; }
.tvicons { margin-left: -1px; }
.sec { height: 25px; background: #e9ebee; border-bottom: 1px solid #cbd3da; display: flex; align-items: center; padding: 0 4px 0 5px; font: 13px "Open Sans", sans-serif; color: #444c54; flex: none; }
.sec svg { margin-left: auto; }
.sec span { margin-left: 5px; letter-spacing: -0.65px; }
.sec .au { letter-spacing: -0.55px; }
.down { border: 4.5px solid transparent; border-top: 7px solid #56809f; border-bottom: 0; }
.sessions { height: 107px; display: flex; padding-top: 9px; }
.slist { width: 210px; height: 94px; overflow: hidden; padding-left: 6px; }
.slist div { display: flex; align-items: center; height: 21.5px; font: 10.5px "Noto Sans", sans-serif; }
.slist span { margin-left: 4px; }
.slist .p1 { letter-spacing: -0.32px; }
.slist .p2 { letter-spacing: -0.3px; }
.slist .p3 { letter-spacing: -0.5px; }
.slist i { border: 4.5px solid transparent; border-top: 6px solid #bcc8d3; border-bottom: 0; margin-left: 5px; }
.sscroll { width: 14px; height: 94px; background: #f1f1f1; display: flex; flex-direction: column; }
.sscroll i { height: 36px; background: #cdcdcd; margin-bottom: auto; }
.audio { border-top: 1px solid #cbd3da; }
.audiobox { height: 50px; display: flex; align-items: center; padding: 5px 0 0 4px; font: 10px/12px "Noto Sans", sans-serif; color: #444; }
.mic { width: 82px; margin: 0 0 0 5px; }
.spk { margin-left: 4px; }
.spk span { letter-spacing: -0.15px; }
.tvfoot { flex: 1; background: #424242; color: #fff; text-align: right; padding: 2px 9px 0 0; font: 11px/16px "Open Sans", sans-serif; letter-spacing: -0.45px; }
```
